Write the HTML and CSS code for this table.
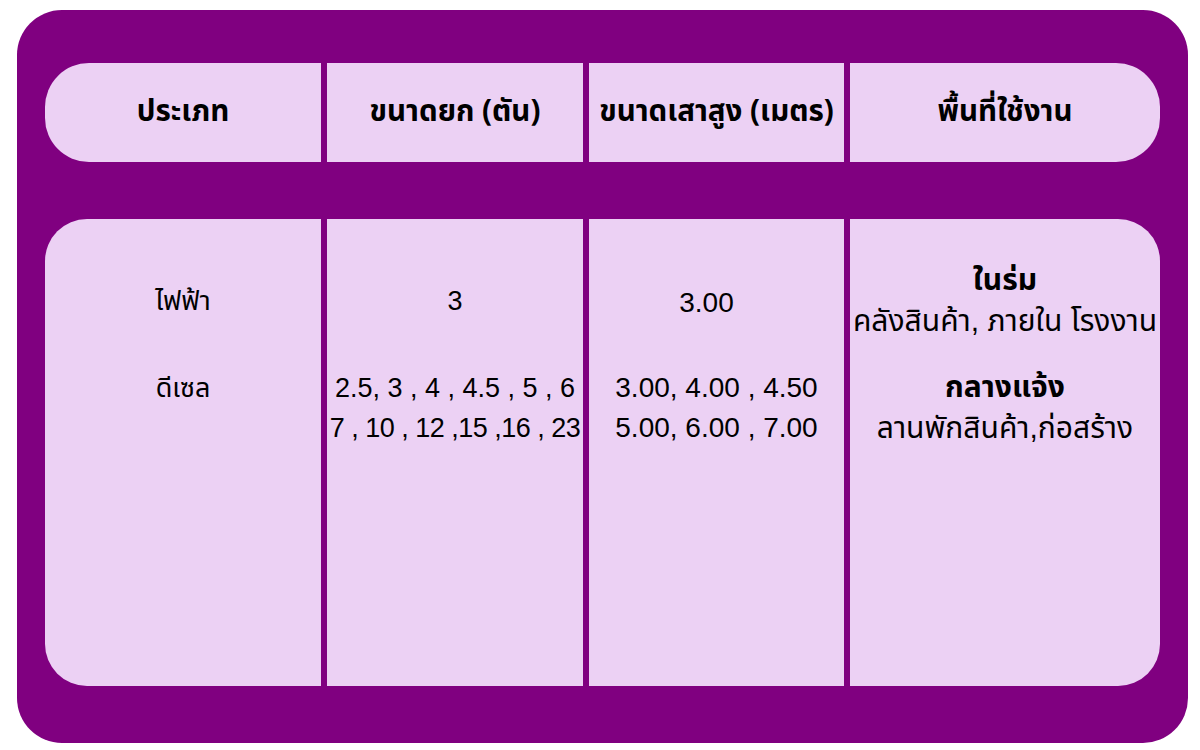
FILE: index.html
```html
<!DOCTYPE html>
<html lang="th">
<head>
<meta charset="utf-8">
<title>ตารางประเภทรถยก</title>
<link rel="stylesheet" href="styles.css">
</head>
<body>
<div class="frame">
  <div class="row head">
    <div class="cell first">ประเภท</div>
    <div class="cell">ขนาดยก (ตัน)</div>
    <div class="cell">ขนาดเสาสูง (เมตร)</div>
    <div class="cell last">พื้นที่ใช้งาน</div>
  </div>
  <div class="row body-row">
    <div class="cell first">
      <div class="blk-a"><div>ไฟฟ้า</div></div>
      <div class="blk-b"><div>ดีเซล</div></div>
    </div>
    <div class="cell">
      <div class="blk-a"><div>3</div></div>
      <div class="blk-b"><div>2.5, 3 , 4 , 4.5 , 5 , 6</div><div class="tight">7 , 10 , 12 ,15 ,16 , 23</div></div>
    </div>
    <div class="cell mast">
      <div class="blk-a"><div class="low">3.00</div></div>
      <div class="blk-b"><div>3.00, 4.00 , 4.50</div><div>5.00, 6.00 , 7.00</div></div>
    </div>
    <div class="cell last area">
      <div class="blk-a"><div class="strong">ในร่ม</div><div>คลังสินค้า, ภายใน โรงงาน</div></div>
      <div class="blk-b"><div class="strong">กลางแจ้ง</div><div>ลานพักสินค้า,ก่อสร้าง</div></div>
    </div>
  </div>
</div>
</body>
</html>
```

FILE: styles.css
```css
html, body {
  margin: 0;
  padding: 0;
  background: #ffffff;
}

body {
  font-family: "Liberation Sans", "Noto Sans Thai", "Noto Sans", sans-serif;
  color: #000000;
}

.frame {
  box-sizing: border-box;
  width: 1171px;
  height: 733px;
  margin: 10px 0 0 17px;
  padding: 53px 28px 0 28px;
  background: #800080;
  border-radius: 45px;
  display: flex;
  flex-direction: column;
  gap: 57px;
}

.row {
  display: grid;
  grid-template-columns: 276px 256px 255px 310px;
  column-gap: 6px;
}

.cell {
  background: #ecd1f4;
  text-align: center;
  white-space: nowrap;
}

.head {
  height: 99px;
}

.head .cell {
  display: flex;
  align-items: center;
  justify-content: center;
  font-family: "Noto Sans Thai", "Noto Sans", sans-serif;
  font-weight: 700;
  font-size: 29.5px;
  padding-bottom: 2px;
  box-sizing: border-box;
}

.head .first { border-radius: 44px 0 0 44px; }
.head .last { border-radius: 0 44px 44px 0; }

.body-row {
  height: 467px;
}

.body-row .cell {
  box-sizing: border-box;
  padding-top: 42px;
  font-size: 27px;
  line-height: 40px;
  display: flex;
  flex-direction: column;
}

.body-row .first { border-radius: 42px 0 0 42px; }
.body-row .last { border-radius: 0 42px 42px 0; }

.body-row .mast {
  font-size: 28px;
}

.body-row .area {
  font-size: 30px;
}

.blk-a {
  height: 80px;
  display: flex;
  flex-direction: column;
  justify-content: center;
}

.blk-b {
  margin-top: 27px;
}

.low {
  padding-top: 3px;
  margin-right: 20px;
}

.tight {
  letter-spacing: -0.5px;
}

.strong {
  font-weight: 700;
  font-family: "Noto Sans Thai", "Noto Sans", sans-serif;
}
```
